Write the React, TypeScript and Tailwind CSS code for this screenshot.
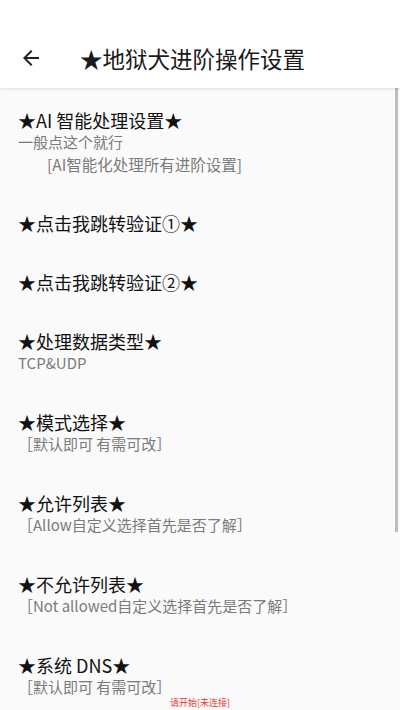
import React from 'react';

type Line = { text: string; indent?: boolean };
type Item = { title: string; lines?: Line[] };

const items: Item[] = [
  { title: '★AI 智能处理设置★', lines: [{ text: '一般点这个就行' }, { text: '[AI智能化处理所有进阶设置]', indent: true }] },
  { title: '★点击我跳转验证①★' },
  { title: '★点击我跳转验证②★' },
  { title: '★处理数据类型★', lines: [{ text: 'TCP&UDP' }] },
  { title: '★模式选择★', lines: [{ text: '［默认即可 有需可改］' }] },
  { title: '★允许列表★', lines: [{ text: '［Allow自定义选择首先是否了解］' }] },
  { title: '★不允许列表★', lines: [{ text: '［Not allowed自定义选择首先是否了解］' }] },
  { title: '★系统 DNS★', lines: [{ text: '［默认即可 有需可改］' }] },
];

export default function App() {
  return (
    <div
      className="relative w-[400px] h-[710px] overflow-hidden bg-[#fafafa]"
      style={{ fontFamily: '"Noto Sans CJK SC", "Noto Sans", sans-serif' }}
    >
      {/* app bar */}
      <div className="h-[88px] bg-white flex items-end pb-[18px] shadow-[0_1px_3px_rgba(0,0,0,0.12)] relative z-10">
        <div className="w-[80px] flex pl-[19px]">
          <svg width="24" height="24" viewBox="0 0 24 24" className="fill-[#212121]">
            <path d="M20 11H7.83l5.59-5.59L12 4l-8 8 8 8 1.41-1.41L7.83 13H20v-2z" />
          </svg>
        </div>
        <div className="text-[22.5px] leading-[24px] text-[#1a1a1a]">★地狱犬进阶操作设置</div>
      </div>

      {/* preference list */}
      <div className="pt-[3px]">
        {items.map((it, idx) => (
          <div key={idx} className="px-[18px] pt-[18px] pb-[19px]">
            <div className="text-[18px] leading-[22px] text-[#111111]">{it.title}</div>
            {it.lines?.map((l, i) => (
              <div
                key={i}
                className={
                  l.indent
                    ? 'pl-[29px] text-[15.5px] leading-[22px] text-[#7a7a7a] whitespace-nowrap'
                    : 'text-[15px] leading-[22px] text-[#7a7a7a] whitespace-nowrap'
                }
              >
                {l.text}
              </div>
            ))}
          </div>
        ))}
      </div>

      {/* scrollbar */}
      <div className="absolute right-[2px] top-[88px] w-[3px] h-[444px] bg-[#bdbdbd]" />

      {/* status */}
      <div className="absolute bottom-[1px] left-0 right-0 text-center text-[9px] leading-[12px] text-[#e53935]">
        请开始[未连接]
      </div>
    </div>
  );
}
